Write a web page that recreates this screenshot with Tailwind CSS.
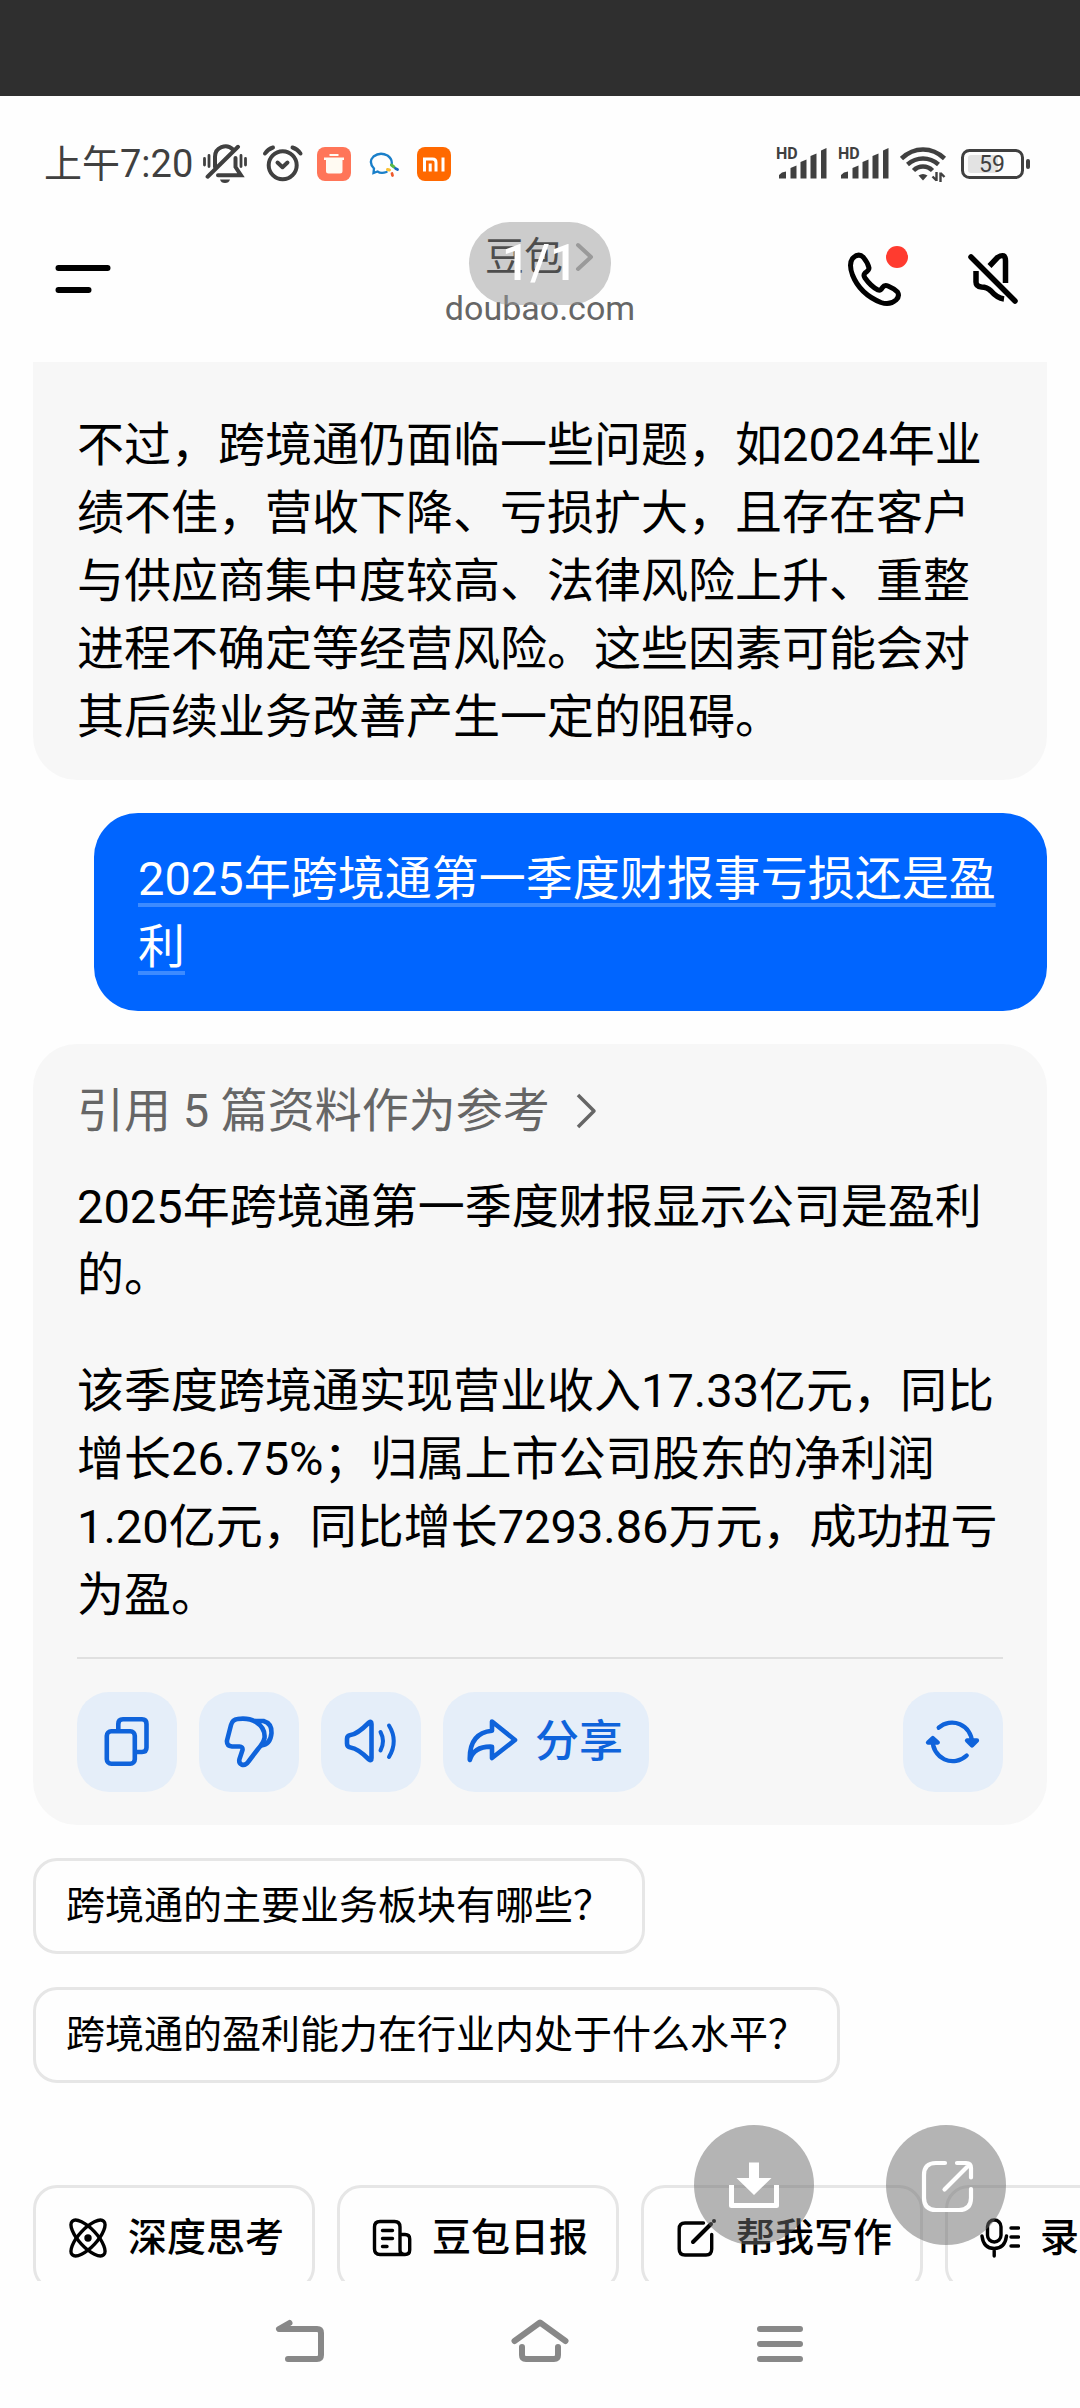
<!DOCTYPE html>
<html lang="zh-CN">
  <head>
    <meta charset="UTF-8" />
    <meta name="viewport" content="width=device-width, initial-scale=1.0" />
    <title>豆包</title>
    <script src="https://cdn.jsdelivr.net/npm/@tailwindcss/browser@4"></script>
  </head>
  <body class="relative overflow-x-hidden bg-[#fefefe] font-[Roboto,'Noto_Sans_CJK_SC',sans-serif] text-black">
    <div class="h-24 bg-[#2f2f2f]"></div>

    <!-- Status bar -->
    <div class="flex h-[136px] items-center justify-between pl-11 pr-12 text-[#404040]">
      <div class="flex items-center">
        <span class="mr-2 text-[38px] leading-12">上午7:20</span>
        <svg class="mr-3 h-[42px] w-12" viewBox="0 0 48 42" fill="none" stroke="currentColor" stroke-width="4" stroke-linecap="round">
          <path d="M14 24V14A10.500 10.500 0 0 1 32 6.500M6.600 33.700L37 3.800M17 32.300H40L34.500 24V15" />
          <path d="M19 36.500H29Q28 40 24 40T19 36.500Z" fill="currentColor" stroke="none" />
          <path d="M3.500 15.500V22M8 12.500V23.500M40 12.500V23.500M44.500 15.500V22" stroke-width="2.800" />
        </svg>
        <svg class="mr-3 h-10 w-11" viewBox="0 0 44 40" fill="none" stroke="currentColor" stroke-width="4" stroke-linecap="round" stroke-linejoin="round">
          <circle cx="21.700" cy="21.300" r="14" />
          <path d="M4 9.500Q7 5 12 3.500M31.500 3.500Q36.500 5 39.500 9.500" />
          <path d="M16.500 18.500L21.500 23.200L26.500 18.500" />
        </svg>
        <svg class="mr-4 h-[34px] w-[34px]" viewBox="0 0 34 34">
          <rect width="34" height="34" rx="8" fill="#ff7558" />
          <path d="M7 10.500H27V13H25.500V24Q25.500 26.500 23 26.500H11.500Q9 26.500 9 24V13H7ZM12.500 7H21.500V9H12.500Z" fill="#fffaf2" />
        </svg>
        <svg class="mr-4 h-[34px] w-[34px]" viewBox="0 0 34 34" fill="none" stroke-linecap="round">
          <path d="M19.500 25Q14 27 10.500 24.500L6.500 26L7 21.500Q1 15 6.500 9.500Q13 4.500 20.500 8.500Q26 12.500 24.500 18" stroke="#1a7fc9" stroke-width="2.300" />
          <path d="M24.500 18L27 20" stroke="#58b947" stroke-width="3" />
          <path d="M28.500 21.500L30.500 22.500" stroke="#1769c0" stroke-width="2.800" />
          <path d="M25 26.500L25.500 28.500" stroke="#ee5a2c" stroke-width="2.800" />
          <path d="M20.500 22.500L22.500 23" stroke="#fac032" stroke-width="3" />
        </svg>
        <svg class="h-[34px] w-[34px]" viewBox="0 0 34 34" fill="none">
          <rect width="34" height="34" rx="8" fill="#ff6900" />
          <path d="M7.500 24.500V12H15.500Q19 12 19 15.500V24.500M13.200 16.500V24.500M26 10.500V24.500" stroke="#fff" stroke-width="3" />
        </svg>
      </div>
      <div class="flex items-center gap-[10px]">
        <svg class="h-[34px] w-[52px] overflow-visible" viewBox="0 0 52 34" fill="currentColor">
          <text x="0" y="12" class="text-base font-bold">HD</text>
          <path d="M3 28L6 25.500L10 24.500V31.500H3ZM14.500 21L20.500 18.500V31.500H14.500ZM24.500 15L30.500 12.500V31.500H24.500ZM34.500 9L40.500 6.500V31.500H34.500ZM45 3.500L50.500 1V31.500H45Z" />
        </svg>
        <svg class="h-[34px] w-[52px] overflow-visible" viewBox="0 0 52 34" fill="currentColor">
          <text x="0" y="12" class="text-base font-bold">HD</text>
          <path d="M3 28L6 25.500L10 24.500V31.500H3ZM14.500 21L20.500 18.500V31.500H14.500ZM24.500 15L30.500 12.500V31.500H24.500ZM34.500 9L40.500 6.500V31.500H34.500ZM45 3.500L50.500 1V31.500H45Z" />
        </svg>
        <svg class="h-9 w-[50px]" viewBox="0 0 50 36" fill="none" stroke="currentColor" stroke-width="4.500">
          <path d="M1.500 12.500Q11 3.500 23 3.500T44.500 12.500M7.500 18.500Q14.500 12.500 23 12.500T38.500 18.500M13.500 24.500Q17.500 20.500 23 20.500T32.500 24.500" />
          <path d="M18.500 29.500Q23 26.500 27.500 29.500L23 34.500Z" fill="currentColor" stroke="none" />
          <path d="M36.500 26V35M32.500 30.500L36.500 34.500M40.500 36V26.500M40.500 27L44.500 31" stroke-width="2.400" />
        </svg>
        <svg class="h-9 w-[72px]" viewBox="0 0 72 36" fill="none">
          <rect x="2.500" y="4.500" width="60" height="27" rx="7" stroke="currentColor" stroke-width="3" />
          <rect x="8" y="9" width="30" height="18" rx="3" fill="#e3e3e3" />
          <rect x="66" y="13" width="4" height="10" rx="2" fill="currentColor" />
          <text x="32" y="26" text-anchor="middle" fill="currentColor" class="text-[23px]">59</text>
        </svg>
      </div>
    </div>

    <!-- Header -->
    <header class="relative flex items-start justify-between pb-9 pl-[53px] pr-[57px]">
      <button type="button" aria-label="菜单" class="flex h-[94px] items-center">
        <svg class="h-[60px] w-[60px]" viewBox="0 0 60 60" stroke="currentColor" stroke-width="6" stroke-linecap="round">
          <path d="M5.500 19H54.500M5.500 41H35.500" />
        </svg>
      </button>
      <div class="absolute inset-x-0 top-0 mx-auto w-60 text-center">
        <a href="#" class="flex items-center justify-center gap-3 text-[39px] leading-[50px]">
          豆包
          <svg class="h-8 w-5" viewBox="0 0 20 32" fill="none" stroke="#9a9a9a" stroke-width="4" stroke-linecap="round" stroke-linejoin="round">
            <path d="M3 4L16 16L3 28" />
          </svg>
        </a>
        <p class="text-[34px] leading-[52px] text-[#666]">doubao.com</p>
      </div>
      <div class="flex h-[94px] items-center gap-[59px]">
        <button type="button" aria-label="通话" class="relative">
          <svg class="h-[60px] w-[60px]" viewBox="0 0 60 60" fill="none" stroke="currentColor" stroke-width="5" stroke-linejoin="round">
            <path d="M8.500 9.500Q14.500 3.500 19.500 8.500Q24 14 25 19Q25 21 21 24Q19 26 21 29Q27 37.500 34 41Q36.500 42 38.500 38.500Q40.500 35.500 44 37Q50 39.500 53.500 43Q56 47 52 51Q46 56.500 37 53.500Q16 45 8.500 26Q4.500 15 8.500 9.500Z" />
          </svg>
          <span class="absolute -top-[3px] right-[-4px] size-[22px] rounded-full bg-[#ff3b2f]"></span>
        </button>
        <button type="button" aria-label="静音">
          <svg class="h-[60px] w-[60px]" viewBox="0 0 60 60" fill="none" stroke="currentColor" stroke-width="5.500">
            <path d="M8 8L52 52" stroke-linecap="round" />
            <path d="M26.500 17L34.500 8.500Q42.500 3.500 42.500 12V34M13 22V33Q13 37.500 18.500 38Q24 38 28 42Q34 49 41 50" />
          </svg>
        </button>
      </div>
    </header>

    <!-- Page counter over the header -->
    <div class="absolute inset-x-0 top-[222px] mx-auto flex h-[83px] w-[142px] items-center justify-center rounded-full bg-[#999]/50 text-[50px] font-medium text-white">1/1</div>

    <!-- Conversation -->
    <main class="flex flex-col items-start px-[33px] text-[47px] leading-[68px]">
      <section class="w-full rounded-b-[44px] bg-[#f7f7f7] px-11 pb-[29px] pt-[49px]">
        <p>不过，跨境通仍面临一些问题，如2024年业绩不佳，营收下降、亏损扩大，且存在客户与供应商集中度较高、法律风险上升、重整进程不确定等经营风险。这些因素可能会对其后续业务改善产生一定的阻碍。</p>
      </section>

      <section class="mt-[33px] self-end rounded-[44px] bg-[#0065ff] px-11 pb-[30px] pt-8 ml-[61px]">
        <a href="#" class="text-white underline decoration-[#3d8bff] decoration-4 underline-offset-[8px]">2025年跨境通第一季度财报事亏损还是盈利</a>
      </section>

      <section class="mt-[33px] w-full rounded-[44px] bg-[#f7f7f7] px-11 pb-[33px] pt-[33px]">
        <button type="button" class="flex items-center gap-6 text-[#666]">
          引用 5 篇资料作为参考
          <svg class="h-9 w-6" viewBox="0 0 24 36" fill="none" stroke="currentColor" stroke-width="3.500" stroke-linejoin="round">
            <path d="M4 2L20 18L4 34" />
          </svg>
        </button>
        <p class="mt-7">2025年跨境通第一季度财报显示公司是盈利的。</p>
        <p class="mt-12">该季度跨境通实现营业收入17.33亿元，同比增长26.75%；归属上市公司股东的净利润1.20亿元，同比增长7293.86万元，成功扭亏为盈。</p>

        <div class="mt-7 flex gap-[22px] border-t-2 border-[#e0e0e0] pt-[33px] text-[#0f63db]">
          <button type="button" aria-label="复制" class="flex size-[100px] items-center justify-center rounded-[32px] bg-[#e5eef9]">
            <svg class="h-[60px] w-[60px]" viewBox="0 0 60 60" fill="none" stroke="currentColor" stroke-width="4.600">
              <rect x="9.800" y="19.300" width="28" height="32.500" rx="4.500" />
              <path d="M21.300 17V12Q21.300 7.300 26 7.300H45Q49.500 7.300 49.500 12V35.500Q49.500 40 45 40H40" />
            </svg>
          </button>
          <button type="button" aria-label="不喜欢" class="flex size-[100px] items-center justify-center rounded-[32px] bg-[#e5eef9]">
            <svg class="h-[60px] w-[60px]" viewBox="0 0 60 60" fill="none" stroke="currentColor" stroke-width="4.600" stroke-linejoin="round">
              <path d="M12 13Q13.500 7.500 18.500 7Q30 5.500 37 10Q46.500 16 45.500 26Q44.500 31 39 37L29.500 49.500Q26.500 54 22.500 52.500Q19.500 51 20.500 47L23.500 38Q24 34.500 20.500 34.500H13Q7.500 34 8 28.500Z" />
              <path d="M36 9L44.500 9Q53 11.500 52.500 21Q51.500 32.500 42 33.500" />
            </svg>
          </button>
          <button type="button" aria-label="朗读" class="flex size-[100px] items-center justify-center rounded-[32px] bg-[#e5eef9]">
            <svg class="h-[60px] w-[60px]" viewBox="0 0 60 60" fill="none" stroke="currentColor" stroke-width="4.600" stroke-linecap="round" stroke-linejoin="round">
              <path d="M6 27Q6 23.500 9.500 23Q16 22.500 28 10.500Q30.500 8.500 30.500 12V46Q30.500 49.500 28 47.500Q17 36.500 9.500 35.500Q6 35 6 31.500Z" />
              <path d="M39.500 20Q44.500 29 39.500 38.500M48 13.500Q57.500 29 48 45" stroke-width="4" />
            </svg>
          </button>
          <button type="button" class="flex h-[100px] items-center gap-[14px] rounded-[32px] bg-[#e5eef9] pl-[18px] pr-[26px] text-[44px] font-medium">
            <svg class="h-[60px] w-[60px]" viewBox="0 0 60 60" fill="none" stroke="currentColor" stroke-width="4.600" stroke-linejoin="round">
              <path d="M8.800 48Q8 21 31 18.700V9.500L54 28L31 46V34.700Q13 34 8.800 48Z" />
            </svg>
            分享
          </button>
          <button type="button" aria-label="重新生成" class="ml-auto flex size-[100px] items-center justify-center rounded-[32px] bg-[#e5eef9]">
            <svg class="h-[60px] w-[60px]" viewBox="0 0 60 60" fill="none" stroke="currentColor" stroke-width="4.300" stroke-linecap="round" stroke-linejoin="round">
              <path d="M15.700 15.700A20 20 0 0 1 49 30M43.700 43.500A20 20 0 0 1 9.800 28" />
              <path d="M44 28.500H54L49 33.500ZM5 30.500H14.800L9.800 26Z" fill="#0065ff" />
            </svg>
          </button>
        </div>
      </section>

      <div class="mt-[33px] flex flex-col items-start gap-[33px] text-[39px] leading-[90px]">
        <button type="button" class="rounded-[24px] border-3 border-[#e6e6e6] px-[30px]">跨境通的主要业务板块有哪些？</button>
        <button type="button" class="rounded-[24px] border-3 border-[#e6e6e6] px-[30px]">跨境通的盈利能力在行业内处于什么水平？</button>
      </div>
    </main>

    <!-- Shortcuts -->
    <section class="relative mt-[102px]">
      <div class="flex h-24 items-start gap-[22px] overflow-hidden pl-[33px] text-[39px] font-medium leading-[100px]">
        <button type="button" class="flex shrink-0 items-center gap-5 rounded-[24px] border-3 border-[#e6e6e6] pl-8 pr-7">
          <svg class="h-10 w-10" viewBox="0 0 40 40" fill="none" stroke="currentColor" stroke-width="3.400">
            <ellipse cx="20" cy="20" rx="23" ry="9" transform="rotate(47 20 20)" />
            <ellipse cx="20" cy="20" rx="23" ry="9" transform="rotate(-47 20 20)" />
            <circle cx="20" cy="20" r="3.700" fill="currentColor" stroke="none" />
          </svg>
          深度思考
        </button>
        <button type="button" class="flex shrink-0 items-center gap-5 rounded-[24px] border-3 border-[#e6e6e6] pl-8 pr-7">
          <svg class="h-10 w-10" viewBox="0 0 40 40" fill="none" stroke="currentColor" stroke-width="3.400">
            <path d="M33 36.500H8Q2.500 36.500 2.500 31V9Q2.500 3.500 8 3.500H22.500Q28 3.500 28 9V32Q28 36.500 33 36.500Q37.700 36.500 37.700 32V21Q37.700 16.500 33 16.500H28" />
            <path d="M10.500 12.500H20.500M10.500 20.500H20.500M10.500 28.500H15" stroke-linecap="round" />
          </svg>
          豆包日报
        </button>
        <button type="button" class="flex shrink-0 items-center gap-5 rounded-[24px] border-3 border-[#e6e6e6] pl-8 pr-7">
          <svg class="h-10 w-10" viewBox="0 0 40 40" fill="none" stroke="currentColor" stroke-width="3.400" stroke-linecap="round">
            <path d="M27.500 5H9Q3.200 5 3.200 11V31Q3.200 37 9 37H30Q35.700 37 35.700 31V16.500" />
            <path d="M17 24L35 6" stroke-width="4" />
            <circle cx="38" cy="3" r="2" fill="currentColor" stroke="none" />
          </svg>
          帮我写作
        </button>
        <button type="button" class="flex shrink-0 items-center gap-5 rounded-[24px] border-3 border-[#e6e6e6] pl-8 pr-7">
          <svg class="h-10 w-10" viewBox="0 0 40 40" fill="none" stroke="currentColor" stroke-width="3.400" stroke-linecap="round">
            <rect x="7.500" y="2" width="13.500" height="22" rx="6.700" />
            <path d="M2 18Q3.500 30.500 14.200 30.500T26.500 18M14.200 31V38M31 10H38.500M31 19H38.500M31 28H38.500" />
          </svg>
          录音纪要
        </button>
      </div>

      <!-- Viewer actions floating over the shortcuts -->
      <div class="absolute -top-[60px] right-[74px] flex gap-[72px] text-white">
        <button type="button" aria-label="下载" class="size-[120px] rounded-full bg-[#6c6c6c]/51">
          <svg viewBox="0 0 120 120" fill="none" stroke="currentColor" stroke-width="5">
            <path d="M55 37.500H65V53H77.500L60 70L42.500 53H55Z" fill="currentColor" stroke="none" />
            <path d="M37.500 60V80.500H82.500V60" stroke-linejoin="round" />
          </svg>
        </button>
        <button type="button" aria-label="打开" class="size-[120px] rounded-full bg-[#6c6c6c]/51">
          <svg viewBox="0 0 120 120" fill="none" stroke="currentColor" stroke-width="4.200" stroke-linecap="round">
            <path d="M59 38H50Q38 38 38 50V73Q38 85 50 85H73Q85 85 85 73V64M71 38H80Q85 38 85 43V52.500M58.500 64.500L83 40" />
          </svg>
        </button>
      </div>
    </section>

    <!-- System navigation -->
    <nav class="flex h-[126px] items-center justify-center gap-[180px] text-[#888]">
      <button type="button" aria-label="返回">
        <svg class="h-[60px] w-[60px]" viewBox="0 0 60 60" fill="none" stroke="currentColor" stroke-width="6" stroke-linecap="round" stroke-linejoin="round">
          <path d="M19.500 9L9 15H47Q51 15 51 19V41Q51 45 47 45H18" />
        </svg>
      </button>
      <button type="button" aria-label="主页">
        <svg class="h-[60px] w-[60px]" viewBox="0 0 60 60" fill="none" stroke="currentColor" stroke-width="6" stroke-linecap="round" stroke-linejoin="round">
          <path d="M4.500 27L30 8.500L55.500 27M12 33V41Q12 45 16 45H44Q48 45 48 41V33" />
        </svg>
      </button>
      <button type="button" aria-label="最近任务">
        <svg class="h-[60px] w-[60px]" viewBox="0 0 60 60" fill="none" stroke="currentColor" stroke-width="6" stroke-linecap="round">
          <path d="M10 15H50M10 30H50M10 45H50" />
        </svg>
      </button>
    </nav>
  </body>
</html>
